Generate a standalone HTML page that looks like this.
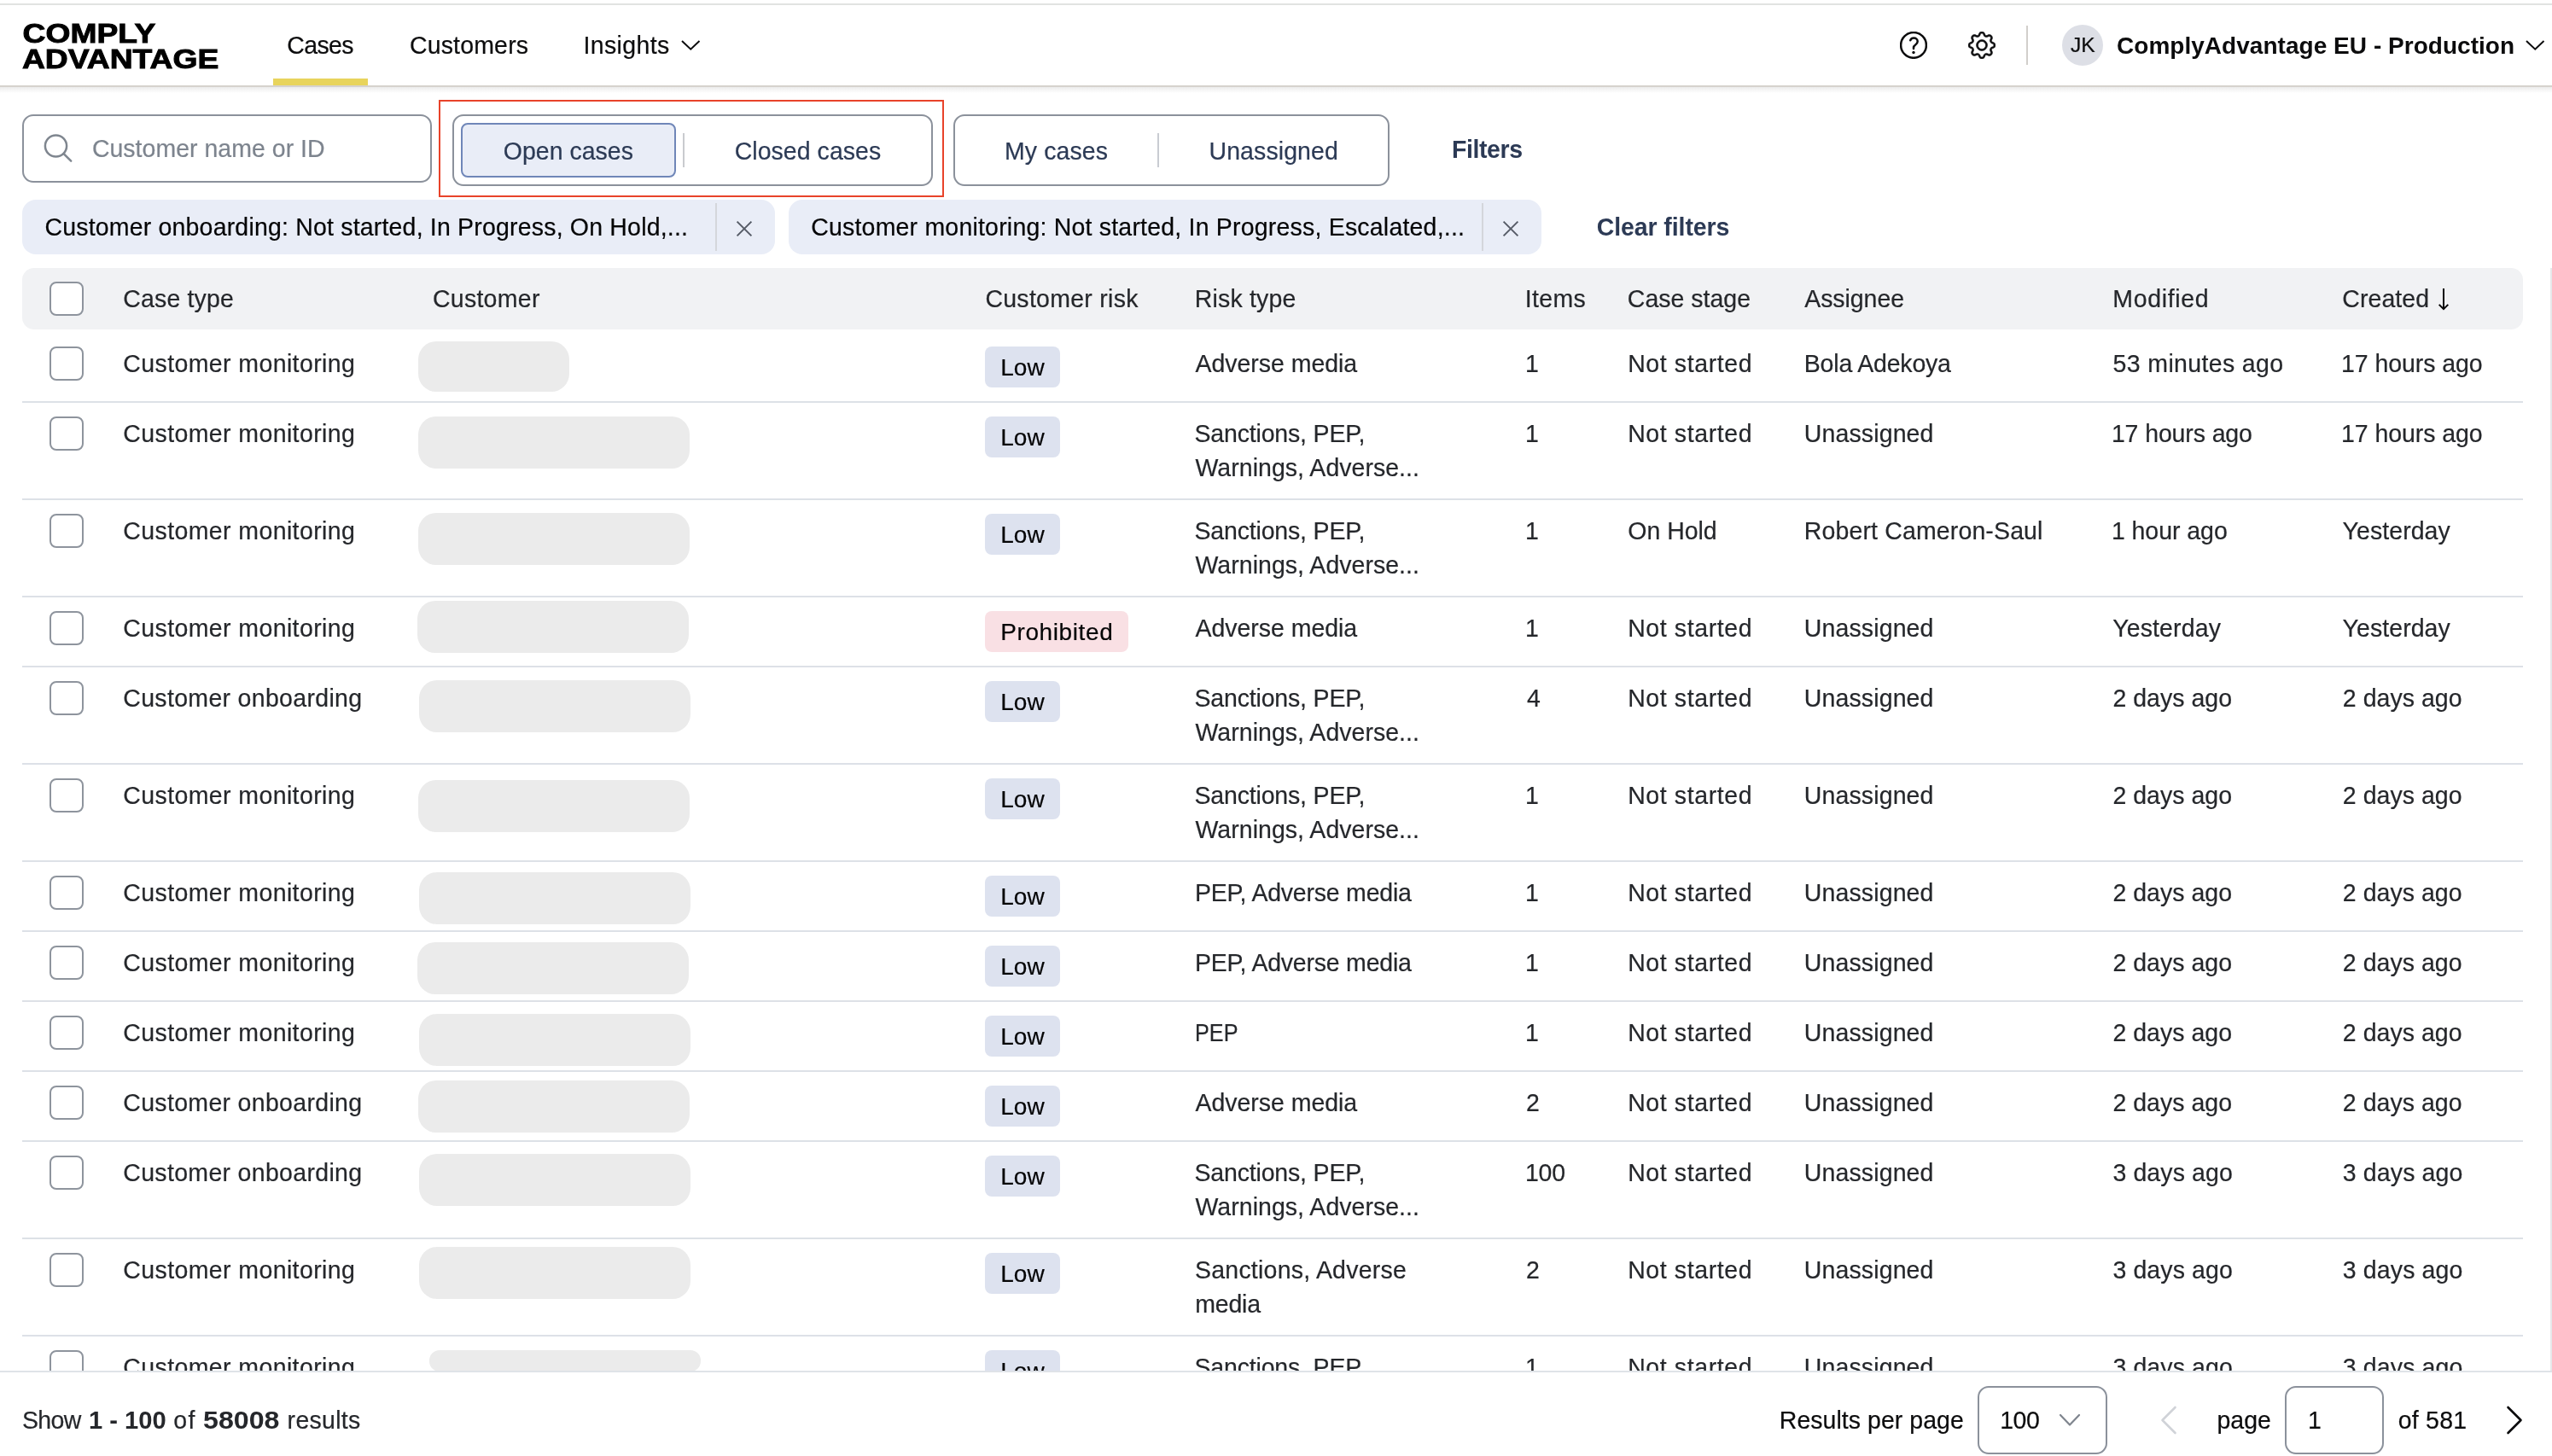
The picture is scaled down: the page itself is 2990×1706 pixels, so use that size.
<!DOCTYPE html>
<html lang="en"><head><meta charset="utf-8"><title>Cases</title>
<style>
html,body{margin:0;padding:0;background:#fff;}
body{width:2990px;height:1706px;position:relative;overflow:hidden;font-family:"Liberation Sans",sans-serif;font-size:28.5px;color:#25272b;}
div{box-sizing:border-box;}
.a{position:absolute;}
.t{position:absolute;white-space:nowrap;line-height:40px;height:40px;-webkit-text-stroke:0.2px currentColor;transform:scaleY(1.02);transform-origin:0 30px;}
.cb{position:absolute;left:58px;width:40px;height:40px;border:2px solid #8e949d;border-radius:8px;background:#fff;}
.pill{position:absolute;background:#ebebeb;border-radius:21px;}
.badge{position:absolute;left:1154px;height:48px;border-radius:8px;}
.low{background:#dde2ef;width:88px;}
.proh{background:#f9e0e4;width:168px;}
.div{position:absolute;left:26px;width:2930px;height:2px;background:#dde1e7;}
</style></head><body><div id="root" style="position:absolute;left:0;top:0;width:2990px;height:1706px;will-change:transform">

<div class="a" style="left:0;top:4px;width:2990px;height:2px;background:#e1e3e1"></div>
<div class="a" style="left:26px;top:314px;width:2930px;height:72px;background:#f1f2f4;border-radius:14px"></div>
<div class="cb" style="top:330px"></div>
<div class="t" style="left:144.30px;top:330px;letter-spacing:0.154px;">Case type</div>
<div class="t" style="left:506.90px;top:330px;letter-spacing:0.280px;">Customer</div>
<div class="t" style="left:1154.40px;top:330px;letter-spacing:0.273px;">Customer risk</div>
<div class="t" style="left:1399.70px;top:330px;letter-spacing:0.181px;">Risk type</div>
<div class="t" style="left:1786.80px;top:330px;letter-spacing:0.318px;">Items</div>
<div class="t" style="left:1906.80px;top:330px;letter-spacing:0.009px;">Case stage</div>
<div class="t" style="left:2114.20px;top:330px;letter-spacing:-0.056px;">Assignee</div>
<div class="t" style="left:2475.30px;top:330px;letter-spacing:0.661px;">Modified</div>
<div class="t" style="left:2744.30px;top:330px;letter-spacing:0.060px;">Created</div>
<svg class="a" style="left:2853px;top:336.7px" width="20" height="30" viewBox="0 0 20 30"><path d="M10 1 V25.2 M4.7 19.9 L10 25.2 L15.3 19.9" fill="none" stroke="#050506" stroke-width="2" stroke-linecap="butt" stroke-linejoin="miter"/></svg>
<div class="div" style="top:470px"></div>
<div class="div" style="top:584px"></div>
<div class="div" style="top:698px"></div>
<div class="div" style="top:780px"></div>
<div class="div" style="top:894px"></div>
<div class="div" style="top:1008px"></div>
<div class="div" style="top:1090px"></div>
<div class="div" style="top:1172px"></div>
<div class="div" style="top:1254px"></div>
<div class="div" style="top:1336px"></div>
<div class="div" style="top:1450px"></div>
<div class="div" style="top:1564px"></div>
<div class="cb" style="top:406px"></div>
<div class="t" style="left:144.30px;top:406px;letter-spacing:0.391px;">Customer monitoring</div>
<div class="pill" style="left:490px;top:400px;width:177px;height:59px"></div>
<div class="badge low" style="top:406px"></div>
<div class="t" style="left:1172.20px;top:411px;transform-origin:0 30px;letter-spacing:0.078px;font-size:28px;color:#050506;">Low</div>
<div class="t" style="left:1400.50px;top:406px;letter-spacing:-0.037px;">Adverse media</div>
<div class="t" style="left:1787.00px;top:406px;">1</div>
<div class="t" style="left:1907.20px;top:406px;letter-spacing:0.595px;">Not started</div>
<div class="t" style="left:2113.80px;top:406px;letter-spacing:-0.193px;">Bola Adekoya</div>
<div class="t" style="left:2475.60px;top:406px;letter-spacing:0.359px;">53 minutes ago</div>
<div class="t" style="left:2743.10px;top:406px;letter-spacing:-0.075px;">17 hours ago</div>
<div class="cb" style="top:488px"></div>
<div class="t" style="left:144.30px;top:488px;letter-spacing:0.391px;">Customer monitoring</div>
<div class="pill" style="left:490px;top:488px;width:318px;height:61px"></div>
<div class="badge low" style="top:488px"></div>
<div class="t" style="left:1172.20px;top:493px;transform-origin:0 30px;letter-spacing:0.078px;font-size:28px;color:#050506;">Low</div>
<div class="t" style="left:1399.50px;top:488px;letter-spacing:-0.175px;">Sanctions, PEP,</div>
<div class="t" style="left:1400.50px;top:528px;letter-spacing:0.029px;">Warnings, Adverse...</div>
<div class="t" style="left:1787.00px;top:488px;">1</div>
<div class="t" style="left:1907.20px;top:488px;letter-spacing:0.595px;">Not started</div>
<div class="t" style="left:2113.80px;top:488px;letter-spacing:0.126px;">Unassigned</div>
<div class="t" style="left:2473.90px;top:488px;letter-spacing:-0.121px;">17 hours ago</div>
<div class="t" style="left:2743.10px;top:488px;letter-spacing:-0.075px;">17 hours ago</div>
<div class="cb" style="top:602px"></div>
<div class="t" style="left:144.30px;top:602px;letter-spacing:0.391px;">Customer monitoring</div>
<div class="pill" style="left:490px;top:601px;width:318px;height:61px"></div>
<div class="badge low" style="top:602px"></div>
<div class="t" style="left:1172.20px;top:607px;transform-origin:0 30px;letter-spacing:0.078px;font-size:28px;color:#050506;">Low</div>
<div class="t" style="left:1399.50px;top:602px;letter-spacing:-0.175px;">Sanctions, PEP,</div>
<div class="t" style="left:1400.50px;top:642px;letter-spacing:0.029px;">Warnings, Adverse...</div>
<div class="t" style="left:1787.00px;top:602px;">1</div>
<div class="t" style="left:1907.30px;top:602px;letter-spacing:-0.033px;">On Hold</div>
<div class="t" style="left:2113.80px;top:602px;letter-spacing:0.135px;">Robert Cameron-Saul</div>
<div class="t" style="left:2473.90px;top:602px;letter-spacing:-0.048px;">1 hour ago</div>
<div class="t" style="left:2744.60px;top:602px;letter-spacing:0.056px;">Yesterday</div>
<div class="cb" style="top:716px"></div>
<div class="t" style="left:144.30px;top:716px;letter-spacing:0.391px;">Customer monitoring</div>
<div class="pill" style="left:489px;top:704px;width:318px;height:61px"></div>
<div class="badge proh" style="top:716px"></div>
<div class="t" style="left:1172.20px;top:721px;transform-origin:0 30px;letter-spacing:0.610px;font-size:28px;color:#050506;">Prohibited</div>
<div class="t" style="left:1400.50px;top:716px;letter-spacing:-0.037px;">Adverse media</div>
<div class="t" style="left:1787.00px;top:716px;">1</div>
<div class="t" style="left:1907.20px;top:716px;letter-spacing:0.595px;">Not started</div>
<div class="t" style="left:2113.80px;top:716px;letter-spacing:0.126px;">Unassigned</div>
<div class="t" style="left:2475.20px;top:716px;letter-spacing:0.131px;">Yesterday</div>
<div class="t" style="left:2744.60px;top:716px;letter-spacing:0.056px;">Yesterday</div>
<div class="cb" style="top:798px"></div>
<div class="t" style="left:144.30px;top:798px;letter-spacing:0.315px;">Customer onboarding</div>
<div class="pill" style="left:491px;top:797px;width:318px;height:61px"></div>
<div class="badge low" style="top:798px"></div>
<div class="t" style="left:1172.20px;top:803px;transform-origin:0 30px;letter-spacing:0.078px;font-size:28px;color:#050506;">Low</div>
<div class="t" style="left:1399.50px;top:798px;letter-spacing:-0.175px;">Sanctions, PEP,</div>
<div class="t" style="left:1400.50px;top:838px;letter-spacing:0.029px;">Warnings, Adverse...</div>
<div class="t" style="left:1789.00px;top:798px;">4</div>
<div class="t" style="left:1907.20px;top:798px;letter-spacing:0.595px;">Not started</div>
<div class="t" style="left:2113.80px;top:798px;letter-spacing:0.126px;">Unassigned</div>
<div class="t" style="left:2475.40px;top:798px;letter-spacing:0.024px;">2 days ago</div>
<div class="t" style="left:2744.80px;top:798px;letter-spacing:0.035px;">2 days ago</div>
<div class="cb" style="top:912px"></div>
<div class="t" style="left:144.30px;top:912px;letter-spacing:0.391px;">Customer monitoring</div>
<div class="pill" style="left:490px;top:914px;width:318px;height:61px"></div>
<div class="badge low" style="top:912px"></div>
<div class="t" style="left:1172.20px;top:917px;transform-origin:0 30px;letter-spacing:0.078px;font-size:28px;color:#050506;">Low</div>
<div class="t" style="left:1399.50px;top:912px;letter-spacing:-0.175px;">Sanctions, PEP,</div>
<div class="t" style="left:1400.50px;top:952px;letter-spacing:0.029px;">Warnings, Adverse...</div>
<div class="t" style="left:1787.00px;top:912px;">1</div>
<div class="t" style="left:1907.20px;top:912px;letter-spacing:0.595px;">Not started</div>
<div class="t" style="left:2113.80px;top:912px;letter-spacing:0.126px;">Unassigned</div>
<div class="t" style="left:2475.40px;top:912px;letter-spacing:0.024px;">2 days ago</div>
<div class="t" style="left:2744.80px;top:912px;letter-spacing:0.035px;">2 days ago</div>
<div class="cb" style="top:1026px"></div>
<div class="t" style="left:144.30px;top:1026px;letter-spacing:0.391px;">Customer monitoring</div>
<div class="pill" style="left:491px;top:1022px;width:318px;height:61px"></div>
<div class="badge low" style="top:1026px"></div>
<div class="t" style="left:1172.20px;top:1031px;transform-origin:0 30px;letter-spacing:0.078px;font-size:28px;color:#050506;">Low</div>
<div class="t" style="left:1399.90px;top:1026px;letter-spacing:-0.220px;">PEP, Adverse media</div>
<div class="t" style="left:1787.00px;top:1026px;">1</div>
<div class="t" style="left:1907.20px;top:1026px;letter-spacing:0.595px;">Not started</div>
<div class="t" style="left:2113.80px;top:1026px;letter-spacing:0.126px;">Unassigned</div>
<div class="t" style="left:2475.40px;top:1026px;letter-spacing:0.024px;">2 days ago</div>
<div class="t" style="left:2744.80px;top:1026px;letter-spacing:0.035px;">2 days ago</div>
<div class="cb" style="top:1108px"></div>
<div class="t" style="left:144.30px;top:1108px;letter-spacing:0.391px;">Customer monitoring</div>
<div class="pill" style="left:489px;top:1104px;width:318px;height:61px"></div>
<div class="badge low" style="top:1108px"></div>
<div class="t" style="left:1172.20px;top:1113px;transform-origin:0 30px;letter-spacing:0.078px;font-size:28px;color:#050506;">Low</div>
<div class="t" style="left:1399.90px;top:1108px;letter-spacing:-0.220px;">PEP, Adverse media</div>
<div class="t" style="left:1787.00px;top:1108px;">1</div>
<div class="t" style="left:1907.20px;top:1108px;letter-spacing:0.595px;">Not started</div>
<div class="t" style="left:2113.80px;top:1108px;letter-spacing:0.126px;">Unassigned</div>
<div class="t" style="left:2475.40px;top:1108px;letter-spacing:0.024px;">2 days ago</div>
<div class="t" style="left:2744.80px;top:1108px;letter-spacing:0.035px;">2 days ago</div>
<div class="cb" style="top:1190px"></div>
<div class="t" style="left:144.30px;top:1190px;letter-spacing:0.391px;">Customer monitoring</div>
<div class="pill" style="left:491px;top:1188px;width:318px;height:61px"></div>
<div class="badge low" style="top:1190px"></div>
<div class="t" style="left:1172.20px;top:1195px;transform-origin:0 30px;letter-spacing:0.078px;font-size:28px;color:#050506;">Low</div>
<div class="t" style="left:1400.13px;top:1190px;transform:scale(0.8849,1.02);">PEP</div>
<div class="t" style="left:1787.00px;top:1190px;">1</div>
<div class="t" style="left:1907.20px;top:1190px;letter-spacing:0.595px;">Not started</div>
<div class="t" style="left:2113.80px;top:1190px;letter-spacing:0.126px;">Unassigned</div>
<div class="t" style="left:2475.40px;top:1190px;letter-spacing:0.024px;">2 days ago</div>
<div class="t" style="left:2744.80px;top:1190px;letter-spacing:0.035px;">2 days ago</div>
<div class="cb" style="top:1272px"></div>
<div class="t" style="left:144.30px;top:1272px;letter-spacing:0.315px;">Customer onboarding</div>
<div class="pill" style="left:490px;top:1266px;width:318px;height:61px"></div>
<div class="badge low" style="top:1272px"></div>
<div class="t" style="left:1172.20px;top:1277px;transform-origin:0 30px;letter-spacing:0.078px;font-size:28px;color:#050506;">Low</div>
<div class="t" style="left:1400.50px;top:1272px;letter-spacing:-0.037px;">Adverse media</div>
<div class="t" style="left:1788.00px;top:1272px;">2</div>
<div class="t" style="left:1907.20px;top:1272px;letter-spacing:0.595px;">Not started</div>
<div class="t" style="left:2113.80px;top:1272px;letter-spacing:0.126px;">Unassigned</div>
<div class="t" style="left:2475.40px;top:1272px;letter-spacing:0.024px;">2 days ago</div>
<div class="t" style="left:2744.80px;top:1272px;letter-spacing:0.035px;">2 days ago</div>
<div class="cb" style="top:1354px"></div>
<div class="t" style="left:144.30px;top:1354px;letter-spacing:0.315px;">Customer onboarding</div>
<div class="pill" style="left:491px;top:1352px;width:318px;height:61px"></div>
<div class="badge low" style="top:1354px"></div>
<div class="t" style="left:1172.20px;top:1359px;transform-origin:0 30px;letter-spacing:0.078px;font-size:28px;color:#050506;">Low</div>
<div class="t" style="left:1399.50px;top:1354px;letter-spacing:-0.175px;">Sanctions, PEP,</div>
<div class="t" style="left:1400.50px;top:1394px;letter-spacing:0.029px;">Warnings, Adverse...</div>
<div class="t" style="left:1787.00px;top:1354px;letter-spacing:-0.250px;">100</div>
<div class="t" style="left:1907.20px;top:1354px;letter-spacing:0.595px;">Not started</div>
<div class="t" style="left:2113.80px;top:1354px;letter-spacing:0.126px;">Unassigned</div>
<div class="t" style="left:2475.40px;top:1354px;letter-spacing:0.112px;">3 days ago</div>
<div class="t" style="left:2744.80px;top:1354px;letter-spacing:0.124px;">3 days ago</div>
<div class="cb" style="top:1468px"></div>
<div class="t" style="left:144.30px;top:1468px;letter-spacing:0.391px;">Customer monitoring</div>
<div class="pill" style="left:491px;top:1461px;width:318px;height:61px"></div>
<div class="badge low" style="top:1468px"></div>
<div class="t" style="left:1172.20px;top:1473px;transform-origin:0 30px;letter-spacing:0.078px;font-size:28px;color:#050506;">Low</div>
<div class="t" style="left:1400.00px;top:1468px;letter-spacing:0.224px;">Sanctions, Adverse</div>
<div class="t" style="left:1400.20px;top:1508px;letter-spacing:-0.168px;">media</div>
<div class="t" style="left:1788.00px;top:1468px;">2</div>
<div class="t" style="left:1907.20px;top:1468px;letter-spacing:0.595px;">Not started</div>
<div class="t" style="left:2113.80px;top:1468px;letter-spacing:0.126px;">Unassigned</div>
<div class="t" style="left:2475.40px;top:1468px;letter-spacing:0.112px;">3 days ago</div>
<div class="t" style="left:2744.80px;top:1468px;letter-spacing:0.124px;">3 days ago</div>
<div class="cb" style="top:1582px"></div>
<div class="t" style="left:144.30px;top:1582px;letter-spacing:0.391px;">Customer monitoring</div>
<div class="pill" style="left:503px;top:1582px;width:318px;height:24.5px;border-radius:12px"></div>
<div class="badge low" style="top:1582px"></div>
<div class="t" style="left:1172.20px;top:1587px;transform-origin:0 30px;letter-spacing:0.078px;font-size:28px;color:#050506;">Low</div>
<div class="t" style="left:1399.50px;top:1582px;letter-spacing:-0.175px;">Sanctions, PEP,</div>
<div class="t" style="left:1400.50px;top:1622px;letter-spacing:0.029px;">Warnings, Adverse...</div>
<div class="t" style="left:1787.00px;top:1582px;">1</div>
<div class="t" style="left:1907.20px;top:1582px;letter-spacing:0.595px;">Not started</div>
<div class="t" style="left:2113.80px;top:1582px;letter-spacing:0.126px;">Unassigned</div>
<div class="t" style="left:2475.40px;top:1582px;letter-spacing:0.112px;">3 days ago</div>
<div class="t" style="left:2744.80px;top:1582px;letter-spacing:0.124px;">3 days ago</div>
<div class="a" style="left:2988px;top:314px;width:2px;height:1292px;background:#e7e8ea"></div>
<div class="a" style="left:0;top:6px;width:2990px;height:94px;background:#fff"></div>
<div class="a" style="left:0;top:100px;width:2990px;height:2px;background:#d6d2cd"></div>
<div class="a" style="left:0;top:102px;width:2990px;height:7px;background:linear-gradient(#ebebeb,#f6f6f6 50%,#ffffff)"></div>
<svg class="a" style="left:20px;top:20px" width="250" height="70" viewBox="0 0 250 70">
<g font-family="Liberation Sans, sans-serif" font-weight="700" font-size="30.8" fill="#000" stroke="#000" stroke-width="0.9" stroke-linejoin="miter">
<text x="6.6" y="29.5" textLength="155.8" lengthAdjust="spacingAndGlyphs">COMPLY</text>
<text x="5.9" y="59.6" textLength="230.4" lengthAdjust="spacingAndGlyphs">ADVANTAGE</text>
</g></svg>
<div class="t" style="left:336.30px;top:33px;letter-spacing:-0.658px;color:#0c0c0d;">Cases</div>
<div class="a" style="left:320px;top:92px;width:111px;height:8px;background:#e8d45c"></div>
<div class="t" style="left:479.90px;top:33px;letter-spacing:0.171px;color:#0c0c0d;">Customers</div>
<div class="t" style="left:683.50px;top:33px;letter-spacing:0.362px;color:#0c0c0d;">Insights</div>
<svg class="a" style="left:794.7px;top:42.7px" width="29" height="20" viewBox="0 0 29 20"><path d="M4 5 L14.25 14.7 L24.5 5" fill="none" stroke="#0c0c0d" stroke-width="2" stroke-linecap="butt" stroke-linejoin="miter"/></svg>
<svg class="a" style="left:2226px;top:37px" width="32" height="32" viewBox="0 0 32 32"><g fill="none" stroke="#0c0c0d" stroke-width="2.5" stroke-linecap="round" stroke-linejoin="round"><circle cx="16" cy="15.9" r="14.9"/><path d="M12.2 10.3 C13 8.3 14.6 7.6 16.2 7.6 C18.8 7.6 20.7 9.3 20.7 11.6 C20.7 13.6 19.6 14.6 18.2 15.5 C16.8 16.4 16 17.4 16 19 V20.1"/></g><circle cx="16" cy="24.5" r="1.7" fill="#0c0c0d"/></svg>
<svg class="a" style="left:2306px;top:37px" width="32" height="32" viewBox="0 0 16 16" fill="#0c0c0d" stroke="#0c0c0d" stroke-width="0.3" stroke-linejoin="round"><path d="M8 4.754a3.246 3.246 0 1 0 0 6.492 3.246 3.246 0 0 0 0-6.492zM5.754 8a2.246 2.246 0 1 1 4.492 0 2.246 2.246 0 0 1-4.492 0z"/><path d="M9.796 1.343c-.527-1.79-3.065-1.79-3.592 0l-.094.319a.873.873 0 0 1-1.255.52l-.292-.16c-1.64-.892-3.433.902-2.54 2.541l.159.292a.873.873 0 0 1-.52 1.255l-.319.094c-1.79.527-1.79 3.065 0 3.592l.319.094a.873.873 0 0 1 .52 1.255l-.16.292c-.892 1.64.901 3.434 2.541 2.54l.292-.159a.873.873 0 0 1 1.255.52l.094.319c.527 1.79 3.065 1.79 3.592 0l.094-.319a.873.873 0 0 1 1.255-.52l.292.16c1.64.893 3.434-.902 2.54-2.541l-.159-.292a.873.873 0 0 1 .52-1.255l.319-.094c1.79-.527 1.79-3.065 0-3.592l-.319-.094a.873.873 0 0 1-.52-1.255l.16-.292c.893-1.64-.902-3.433-2.541-2.54l-.292.159a.873.873 0 0 1-1.255-.52l-.094-.319zm-2.633.283c.246-.835 1.428-.835 1.674 0l.094.319a1.873 1.873 0 0 0 2.693 1.115l.291-.16c.764-.415 1.6.42 1.184 1.185l-.159.292a1.873 1.873 0 0 0 1.116 2.692l.318.094c.835.246.835 1.428 0 1.674l-.319.094a1.873 1.873 0 0 0-1.115 2.693l.16.291c.415.764-.42 1.6-1.185 1.184l-.291-.159a1.873 1.873 0 0 0-2.693 1.116l-.094.318c-.246.835-1.428.835-1.674 0l-.094-.319a1.873 1.873 0 0 0-2.692-1.115l-.292.16c-.764.415-1.6-.42-1.184-1.185l.159-.291A1.873 1.873 0 0 0 1.945 8.93l-.319-.094c-.835-.246-.835-1.428 0-1.674l.319-.094A1.873 1.873 0 0 0 3.06 4.377l-.16-.292c-.415-.764.42-1.6 1.185-1.184l.292.159a1.873 1.873 0 0 0 2.692-1.115l.094-.319z"/></svg>
<div class="a" style="left:2374px;top:30px;width:2px;height:46px;background:#d2cfcb"></div>
<div class="a" style="left:2416px;top:29px;width:48px;height:48px;border-radius:24px;background:#dddfe6"></div>
<div class="t" style="left:2426.30px;top:33px;transform-origin:0 28px;transform:scale(1.0250,1.02);font-size:24px;color:#0c0c0d;">JK</div>
<div class="t" style="left:2480.00px;top:34px;transform-origin:0 30px;letter-spacing:0.032px;font-size:28px;font-weight:700;-webkit-text-stroke:0;color:#0c0c0d;">ComplyAdvantage EU - Production</div>
<svg class="a" style="left:2955.6px;top:42.7px" width="29" height="20" viewBox="0 0 29 20"><path d="M4 5 L14.25 14.7 L24.5 5" fill="none" stroke="#0c0c0d" stroke-width="2" stroke-linecap="butt" stroke-linejoin="miter"/></svg>
<div class="a" style="left:26px;top:134px;width:480px;height:80px;border:2px solid #8b919b;border-radius:13px;background:#fff"></div>
<svg class="a" style="left:50px;top:155px" width="38" height="38" viewBox="0 0 38 38"><g fill="none" stroke="#7f868f" stroke-width="2.5" stroke-linecap="round"><circle cx="15.5" cy="16" r="12.6"/><path d="M24.6 25.2 L33.2 33.6"/></g></svg>
<div class="t" style="left:107.90px;top:154px;letter-spacing:0.015px;color:#7d848e;">Customer name or ID</div>
<div class="a" style="left:514px;top:117px;width:592px;height:114px;border:2px solid #e8432a"></div>
<div class="a" style="left:530px;top:134px;width:563px;height:84px;border:2px solid #8b919b;border-radius:13px;background:#fff"></div>
<div class="a" style="left:540px;top:144px;width:252px;height:64px;border:2px solid #6f86b8;border-radius:8px;background:#e9edf7"></div>
<div class="a" style="left:799.7px;top:156px;width:2px;height:40px;background:#c9cbcf"></div>
<div class="t" style="left:589.80px;top:157px;letter-spacing:0.007px;color:#2c3a55;">Open cases</div>
<div class="t" style="left:860.70px;top:157px;letter-spacing:0.042px;color:#2c3a55;">Closed cases</div>
<div class="a" style="left:1117px;top:134px;width:511px;height:84px;border:2px solid #8b919b;border-radius:13px;background:#fff"></div>
<div class="a" style="left:1356px;top:156px;width:2px;height:40px;background:#c9ccd2"></div>
<div class="t" style="left:1177.00px;top:157px;letter-spacing:0.099px;color:#2c3a55;">My cases</div>
<div class="t" style="left:1416.50px;top:157px;letter-spacing:0.093px;color:#2c3a55;">Unassigned</div>
<div class="t" style="left:1700.90px;top:155px;letter-spacing:-0.396px;font-weight:700;-webkit-text-stroke:0;color:#2c3a55;">Filters</div>
<div class="a" style="left:26px;top:234px;width:882px;height:64px;border-radius:16px;background:#e9edf7"></div>
<div class="t" style="left:52.40px;top:246px;letter-spacing:0.186px;color:#050506;">Customer onboarding: Not started, In Progress, On Hold,...</div>
<div class="a" style="left:838px;top:238px;width:2px;height:56px;background:#d4d6db"></div>
<svg class="a" style="left:861px;top:257px" width="22" height="22" viewBox="0 0 22 22"><path d="M2.6 2.6 L19.4 19.4 M19.4 2.6 L2.6 19.4" fill="none" stroke="#565c67" stroke-width="2" stroke-linecap="butt"/></svg>
<div class="a" style="left:924px;top:234px;width:882px;height:64px;border-radius:16px;background:#e9edf7"></div>
<div class="t" style="left:950.20px;top:246px;letter-spacing:0.199px;color:#050506;">Customer monitoring: Not started, In Progress, Escalated,...</div>
<div class="a" style="left:1736px;top:238px;width:2px;height:56px;background:#d4d6db"></div>
<svg class="a" style="left:1759px;top:257px" width="22" height="22" viewBox="0 0 22 22"><path d="M2.6 2.6 L19.4 19.4 M19.4 2.6 L2.6 19.4" fill="none" stroke="#565c67" stroke-width="2" stroke-linecap="butt"/></svg>
<div class="t" style="left:1870.70px;top:246px;letter-spacing:-0.089px;font-weight:700;-webkit-text-stroke:0;color:#2c3a55;">Clear filters</div>
<div class="a" style="left:0;top:1606px;width:2990px;height:100px;background:#fff"></div>
<div class="a" style="left:0;top:1606px;width:2990px;height:2px;background:#dfe3e8"></div>
<div class="t" style="left:25.90px;top:1644px;letter-spacing:-0.637px;">Show</div>
<div class="t" style="left:104.28px;top:1644px;transform:scale(1.0221,1.02);font-weight:700;-webkit-text-stroke:0;">1 - 100</div>
<div class="t" style="left:203.30px;top:1644px;letter-spacing:1.450px;">of</div>
<div class="t" style="left:238.40px;top:1644px;transform:scale(1.1288,1.02);font-weight:700;-webkit-text-stroke:0;">58008</div>
<div class="t" style="left:336.60px;top:1644px;letter-spacing:0.301px;">results</div>
<div class="t" style="left:2084.80px;top:1644px;letter-spacing:0.039px;color:#0c0c0d;">Results per page</div>
<div class="a" style="left:2317px;top:1624px;width:152px;height:80px;border:2px solid #8b919b;border-radius:13px;background:#fff"></div>
<div class="t" style="left:2343.20px;top:1644px;letter-spacing:-0.450px;color:#0c0c0d;">100</div>
<svg class="a" style="left:2411px;top:1654px" width="28" height="20" viewBox="0 0 28 20"><path d="M3 4 L14 15.5 L25 4" fill="none" stroke="#7f858e" stroke-width="2.2" stroke-linecap="round" stroke-linejoin="round"/></svg>
<svg class="a" style="left:2528px;top:1644px" width="26" height="40" viewBox="0 0 26 40"><path d="M20.5 5 L5.5 20 L20.5 35" fill="none" stroke="#d0d3d8" stroke-width="2.6" stroke-linecap="round" stroke-linejoin="round"/></svg>
<div class="t" style="left:2597.50px;top:1644px;letter-spacing:-0.017px;color:#0c0c0d;">page</div>
<div class="a" style="left:2677px;top:1624px;width:116px;height:80px;border:2px solid #8b919b;border-radius:13px;background:#fff"></div>
<div class="t" style="left:2704.00px;top:1644px;color:#0c0c0d;">1</div>
<div class="t" style="left:2809.70px;top:1644px;letter-spacing:0.243px;color:#0c0c0d;">of 581</div>
<svg class="a" style="left:2933px;top:1644px" width="26" height="40" viewBox="0 0 26 40"><path d="M5.5 5 L20.5 20 L5.5 35" fill="none" stroke="#0c0c0d" stroke-width="2.6" stroke-linecap="round" stroke-linejoin="round"/></svg>
</div></body></html>
